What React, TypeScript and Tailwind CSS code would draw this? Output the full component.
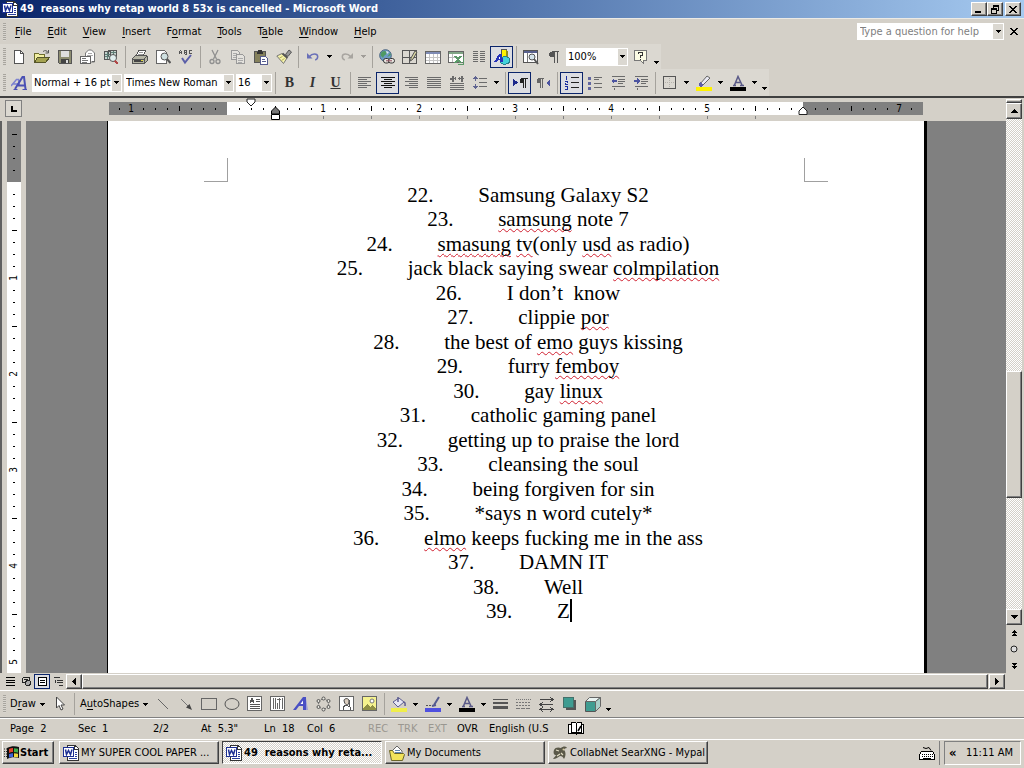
import React from 'react';

const raised =
  'border border-t-white border-l-white border-r-[#404040] border-b-[#404040] shadow-[inset_-1px_-1px_0_#808080] bg-[#d4d0c8]';
const dither = 'bg-[repeating-conic-gradient(#ffffff_0_25%,#d4d0c8_0_50%)] bg-[length:2px_2px]';

type Kids = { children?: React.ReactNode };

function Ico({ children, w = 16, h = 16, smooth = false }: Kids & { w?: number; h?: number; smooth?: boolean }) {
  return (
    <svg
      width={w}
      height={h}
      viewBox={`0 0 ${w} ${h}`}
      fill="none"
      stroke="none"
      shapeRendering={smooth ? 'auto' : 'crispEdges'}
      className="shrink-0"
      aria-hidden="true"
    >
      {children}
    </svg>
  );
}

function Btn({ label, pressed, children }: Kids & { label: string; pressed?: boolean }) {
  return (
    <button
      aria-label={label}
      className={
        'flex h-[22px] w-[23px] shrink-0 items-center justify-center ' +
        (pressed ? 'border border-[#0a246a] bg-[#dcdde2]' : '')
      }
    >
      {children}
    </button>
  );
}

function Tri({ dir = 'down', color = '#000' }: { dir?: 'down' | 'up' | 'left' | 'right'; color?: string }) {
  const d = { down: 'M0 0h5v1h-1v1h-1v1h-1v-1h-1v-1h-1z', up: 'M3 0h1v1h1v1h1v1h1v1h-7v-1h1v-1h1v-1h1z', left: 'M3 0h1v7h-1v-1h-1v-1h-1v-1h-1v-1h1v-1h1v-1h1z', right: 'M0 0h1v1h1v1h1v1h1v1h-1v1h-1v1h-1v1h-1z' }[dir];
  const size = { down: [5, 3], up: [7, 4], left: [4, 7], right: [4, 7] }[dir];
  return (
    <Ico w={size[0]} h={size[1]}>
      <path d={d} fill={color} />
    </Ico>
  );
}

function Drop({ label, color }: { label: string; color?: string }) {
  return (
    <button aria-label={label} className="flex h-[22px] w-[11px] shrink-0 items-center justify-center">
      <Tri color={color} />
    </button>
  );
}

function Sep() {
  return (
    <span className="flex h-[22px] w-[6px] shrink-0 justify-center">
      <span className="w-px bg-[#a5a29c]" />
    </span>
  );
}

function Grip() {
  return (
    <span className="mr-[1px] ml-[3px] h-[18px] w-[3px] shrink-0 bg-[repeating-linear-gradient(to_bottom,#a8a59e_0_1px,#d9d6d0_1px_2px)]" />
  );
}

function Tail({ label }: { label: string }) {
  return (
    <button aria-label={label} className="flex h-[22px] w-[9px] shrink-0 items-end justify-center pb-[4px]">
      <Tri />
    </button>
  );
}

function Combo({ label, value, width }: { label: string; value: string; width: string }) {
  return (
    <div className={`relative flex h-[18px] shrink-0 items-center bg-white ${width}`}>
      <select
        aria-label={label}
        className="h-full w-full appearance-none bg-transparent pr-[8px] pl-[2px] whitespace-nowrap outline-none"
      >
        <option>{value}</option>
      </select>
      <span className="pointer-events-none absolute top-px right-px bottom-px flex w-[9px] items-center justify-center bg-[#dbd8d1]">
        <Tri />
      </span>
    </div>
  );
}

/* ---------- icons ---------- */
const G = '#6b6b6b';

const lineIcon = (rows: [number, number][], color = G) => (
  <Ico>
    {rows.map(([x, w], i) => (
      <rect key={i} x={x} y={2 + i * 2} width={w} height="1" fill={color} />
    ))}
  </Ico>
);

const WordIcon = () => (
  <Ico>
    <path d="M4 .5h8l3.500 3V15.500H4z" fill="#fff" stroke="#333" />
    <path d="M11 1v3h4" stroke="#333" />
    <path d="M12 7h2M12 9h2M12 11h2M6 13h8" stroke="#2a3f9a" />
    <rect x=".5" y="2.500" width="10" height="9" fill="#fff" stroke="#1c2f93" />
    <path d="M2.500 4.500l1 5 2-4 2 4 1.500-5" stroke="#1c2f93" strokeWidth="1.500" shapeRendering="auto" />
  </Ico>
);

const NewI = () => (
  <Ico>
    <path d="M3.500 1.500h6l3 3v10h-9z" fill="#fff" stroke="#555" />
    <path d="M9.500 1.500v3h3" stroke="#555" />
  </Ico>
);
const OpenI = () => (
  <Ico>
    <path d="M.5 13.500v-9h4l1 1h5v3" fill="#f2efa0" stroke="#6d6d2f" />
    <path d="M.5 13.500l3-5h12l-4 5z" fill="#a5a352" stroke="#55552a" />
    <path d="M9 2.500c2-1.500 4-1 5 1M14.500 1v3h-3" stroke="#555" shapeRendering="auto" />
  </Ico>
);
const SaveI = () => (
  <Ico>
    <path d="M1.500 1.500h13v13h-12l-1-1z" fill="#8d8d71" stroke="#555" />
    <rect x="4" y="2" width="8" height="6" fill="#dedede" />
    <rect x="4" y="10" width="8" height="4" fill="#444" />
    <rect x="9" y="11" width="2" height="3" fill="#ddd" />
  </Ico>
);
const MailI = () => (
  <Ico>
    <path d="M5.500 8V4l3-3h3l3 3v9h-4" fill="#fff" stroke="#777" shapeRendering="auto" />
    <path d="M8 4h4M7 6h6" stroke="#aaa" />
    <rect x=".5" y="7.500" width="10" height="7" fill="#fff" stroke="#666" />
    <path d="M2 9.500h4M2 11.500h6M2 13h5" stroke="#777" />
    <path d="M12 12.500h3" stroke="#666" />
  </Ico>
);
const SearchI = () => (
  <Ico>
    <path d="M1.500 2.500h6v8h-6zM5.500 1.500h8v6h-8z" fill="#c5d3ce" stroke="#555" />
    <path d="M2 5h5M2 7h5M4 3v7M8 3h5M10 2v5" stroke="#5d7d75" />
    <circle cx="10" cy="9" r="3.500" fill="#dfeeee" stroke="#555" shapeRendering="auto" />
    <path d="M12 12l3 3" stroke="#b04848" strokeWidth="2" />
  </Ico>
);
const PrintI = () => (
  <Ico>
    <path d="M4.500 6.500l2-5h7l-2 5z" fill="#fff" stroke="#555" />
    <path d="M7 3h4M6 5h5" stroke="#999" />
    <path d="M.5 9.500l3-3h11l1 1v4l-3 3h-12z" fill="#b5b5a5" stroke="#555" />
    <path d="M1 10h11v4M12 10l3-3" stroke="#555" />
    <path d="M2 12h9" stroke="#444" strokeWidth="2" />
    <rect x="9" y="11" width="2" height="1" fill="#dbd53b" />
  </Ico>
);
const PreviewI = () => (
  <Ico>
    <path d="M1.500 1.500h8l2 2v11h-10z" fill="#fff" stroke="#666" />
    <circle cx="9.500" cy="7.500" r="3.500" fill="#cfe0e0" stroke="#555" shapeRendering="auto" />
    <path d="M12 10l3.500 4" stroke="#555" strokeWidth="2" shapeRendering="auto" />
  </Ico>
);
const SpellI = () => (
  <Ico>
    <path d="M1.500 5V2.500l1-1 1 1V5M1.500 3.500h2M6.500 5V1h2v4h-2M6 3h3M14 1.500h-3v3h3" stroke="#555" />
    <path d="M4 9l3 4.500L13 6" stroke="#5b5fa8" strokeWidth="2" shapeRendering="auto" />
  </Ico>
);
const CutI = () => (
  <Ico smooth>
    <path d="M5 1l4.500 9M11 1L6.500 10" stroke="#8f8f8f" strokeWidth="1.300" />
    <circle cx="5" cy="12.500" r="2" stroke="#8f8f8f" strokeWidth="1.300" />
    <circle cx="11" cy="12.500" r="2" stroke="#8f8f8f" strokeWidth="1.300" />
  </Ico>
);
const CopyI = () => (
  <Ico>
    <path d="M1.500 1.500h6l2 2v7h-8z" fill="#e4e2dd" stroke="#999" />
    <path d="M6.500 5.500h6l2 2v7h-8z" fill="#e4e2dd" stroke="#999" />
    <path d="M3 4h4M3 6h3M3 8h3M8 9h5M8 11h5M8 13h4" stroke="#aaa" />
  </Ico>
);
const PasteI = () => (
  <Ico>
    <rect x="1.500" y="2.500" width="11" height="11" fill="#85815c" stroke="#555" />
    <path d="M4 3.500h6M5 1.500h4" stroke="#333" strokeWidth="2" />
    <path d="M7.500 7.500h5l2 2v6h-7z" fill="#fff" stroke="#555b8f" />
    <path d="M9 10h3M9 12h4" stroke="#555b8f" />
  </Ico>
);
const BrushI = () => (
  <Ico smooth>
    <path d="M.8 7l5.200-2.500 5 4.500-3.500 5.500z" fill="#f6f3a8" stroke="#777" />
    <path d="M3.500 9l3-1.500M5.500 11.500l3-2" stroke="#b3af5c" />
    <path d="M6.500 4.500l5 4.500" stroke="#555" strokeWidth="2" />
    <path d="M9.500 5.500l3.500-4.500 2.500 2L12 7.500z" fill="#999" stroke="#555" />
  </Ico>
);
const UndoI = ({ c = '#6a70b8', flip = false }: { c?: string; flip?: boolean }) => (
  <Ico smooth>
    <g transform={flip ? 'matrix(-1 0 0 1 16 0)' : undefined}>
      <path d="M2 4v5.500h5.500z" fill={c} />
      <path d="M4.500 7.500C7 4 12.500 4 12.700 7.500c0 2-1 3-2.500 3.500" stroke={c} strokeWidth="1.500" />
    </g>
  </Ico>
);
const LinkI = () => (
  <Ico smooth>
    <circle cx="6.500" cy="6.500" r="5.800" fill="#6d9cc4" stroke="#46617f" />
    <path d="M2.500 3c3-2 5-1 5 1S5 6 4.500 8 2 7 1.500 6M8 8l4-2-1-2" fill="#4f9a63" />
    <path d="M7 2l3 1-2 2z" fill="#dfeaf2" />
    <rect x="4.500" y="9.500" width="6" height="4.500" rx="2.200" fill="#e9e7e2" stroke="#333" />
    <rect x="9.500" y="9.500" width="6" height="4.500" rx="2.200" fill="#e9e7e2" stroke="#333" />
    <path d="M7 11.800h6" stroke="#8d4a5c" />
  </Ico>
);
const BordersI = () => (
  <Ico>
    <path d="M.5 1.500h14v13H.5zM7.500 1v14M1 8.500h14" stroke="#555" />
    <path d="M13 2l-4 7-.500 3 2.500-2 4-7z" fill="#dcd9a4" stroke="#555" shapeRendering="auto" />
  </Ico>
);
const TableI = () => (
  <Ico>
    <rect x=".5" y="2.500" width="15" height="12" fill="#fff" stroke="#666" />
    <rect x="1" y="3" width="14" height="2" fill="#7f8cb5" />
    <path d="M4.500 5v9M8.500 5v9M12 5v9M1 8.500h14M1 11.500h14" stroke="#c5c5c5" />
  </Ico>
);
const ExcelI = () => (
  <Ico>
    <rect x=".5" y="2.500" width="15" height="11" fill="#fff" stroke="#666" />
    <rect x="1" y="3" width="14" height="2" fill="#7fa585" />
    <path d="M4.500 5v8M1 8.500h9" stroke="#bbb" />
    <path d="M7 7l6 7M13 7l-6 7" stroke="#5b9868" strokeWidth="2" />
    <path d="M15 8v7h-5" stroke="#5b9868" />
  </Ico>
);
const ColsI = () => (
  <Ico>
    <path d="M2 2.500h5M2 4.500h5M2 6.500h5M2 8.500h5M2 10.500h5M2 12.500h5M9 2.500h5M9 4.500h5M9 6.500h5M9 8.500h5M9 10.500h5M9 12.500h5" stroke={G} />
  </Ico>
);
const DrawI = () => (
  <Ico>
    <path d="M7.500.5h5v9h-5z" fill="#fff200" stroke="#555" />
    <path d="M12 1l2 2v7h-2z" fill="#8f8f20" />
    <path d="M6 10c1-3 9-3 9.500 0v2.500c-1 3.500-9 3.500-9.500 0z" fill="#43d3dc" stroke="#257f8c" />
    <path d="M0 13L5 5h3l1 8H6v-2H4l-1 2z" fill="#2632b8" />
    <rect x="5" y="8" width="1" height="2" fill="#fff" />
  </Ico>
);
const MapI = () => (
  <Ico>
    <rect x=".5" y="1.500" width="14" height="12" fill="#fff" stroke="#555" />
    <rect x="1" y="2" width="13" height="2" fill="#59618e" />
    <path d="M4.500 4v9" stroke="#777" />
    <circle cx="9" cy="8" r="3" fill="#d7e6ee" stroke="#555" shapeRendering="auto" />
    <path d="M11 10l4 5" stroke="#555" strokeWidth="2" shapeRendering="auto" />
  </Ico>
);
const ParaI = () => (
  <Ico>
    <path d="M6 2h7v1H6zM4 3h4v5H4zM3 4h1v3H3zM8 2h1v12H8zM11 2h1v12h-1z" fill="#555" />
  </Ico>
);
const HelpI = () => (
  <Ico>
    <path d="M1.500 1.500h12v10h-3v3l-3-3h-6z" fill="#fbfbe4" stroke="#777" />
    <path d="M5.500 5V3.500h4V6l-2 1v1.500M7.500 10v1" stroke="#333" />
  </Ico>
);
const StylesI = () => (
  <Ico smooth>
    <path d="M0 11L5.500 4.500h2l1 6.500M2 9h6" stroke="#7d82d0" strokeWidth="1.500" />
    <path d="M4 14L11.500 2h1.500l1.500 12M7 10.500h7" stroke="#4a50b4" strokeWidth="2" />
    <path d="M2.500 14.500h4M11.500 14.500h4.500" stroke="#4a50b4" />
  </Ico>
);
const DistI = () => (
  <Ico>
    <path d="M1 8.500h14M1 10.500h14M1 12.500h14M1 14.500h14" stroke={G} />
    <path d="M1 3.500h6M9 3.500h6" stroke={G} />
    <path d="M3 1v5h1V1zM12 1v5h1V1zM1 3h1v1H1zM6 2v3M10 2v3" stroke={G} />
  </Ico>
);
const SpacingI = () => (
  <Ico>
    <path d="M7 3.500h8M7 7.500h8M7 11.500h8" stroke={G} />
    <path d="M3.500 1v5M3.500 9v5M1 3.500h5M2 2.500h3M1 11.500h5M2 12.500h3" stroke="#5e6390" />
  </Ico>
);
const DirI = ({ rtl = false }: { rtl?: boolean }) => (
  <Ico>
    {rtl ? (
      <path d="M3 3h6v1H3zM2 4h3v4H2zM5 3h1v10H5zM7 3h1v10H7z" fill="#666" />
    ) : (
      <path d="M9 3h7v1H9zM8 4h3v4H8zM11 3h1v10h-1zM13 3h1v10h-1z" fill="#222" />
    )}
    {rtl ? <path d="M15 5v6l-4-3z" fill="#4c54a0" /> : <path d="M1 4v7l5-3.500z" fill="#1b278b" />}
  </Ico>
);
const NumI = () => (
  <Ico>
    <path d="M7 2.500h8M7 7.500h8M7 12.500h8" stroke="#222" />
    <path d="M2 1h1v4H2zM1 6h3v1H1zM3 7h1v1H2v1h2v1H1V8h1zM1 11h3v1H1zM3 12h1v3H1v-1h2zM2 13h2" fill="#1b2fa0" />
  </Ico>
);
const BulI = () => (
  <Ico>
    <path d="M7 2.500h8M7 4.500h5M7 8.500h8M7 12.500h8" stroke={G} />
    <path d="M1 2h3v3H1zM1 7h3v3H1zM1 12h3v3H1z" fill="#6166a0" />
  </Ico>
);
const IndentI = ({ right = false }: { right?: boolean }) => (
  <Ico>
    <path d="M2 1.500h13M8 4.500h7M8 6.500h7M8 8.500h5M2 11.500h13M4.500 13v2" stroke={G} />
    {right ? <path d="M1 5h3V3l3 3-3 3V7H1z" fill="#4c54a0" /> : <path d="M7 5H4V3L1 6l3 3V7h3z" fill="#4c54a0" />}
  </Ico>
);
const BoxI = () => (
  <Ico>
    <rect x="1.500" y="1.500" width="12" height="12" stroke="#555" />
    <path d="M7.500 3v10M3 7.500h10" stroke="#b5b2ac" strokeDasharray="1 1" />
  </Ico>
);
const HiI = () => (
  <Ico>
    <path d="M4 9L11 1l3 2-7 7z" fill="#e9e9f4" stroke="#666" shapeRendering="auto" />
    <path d="M3 10l3 1M4 8l3 3" stroke="#5e5ea8" strokeWidth="2" />
    <rect x="0" y="12" width="16" height="4" fill="#fff200" />
  </Ico>
);
const FontColorI = () => (
  <Ico>
    <path d="M3 10.500h3M10 10.500h4M4.500 10L8 1.500 12 10M5.500 7.500h5" stroke="#5a5a88" strokeWidth="1.500" shapeRendering="auto" />
    <rect x="0" y="12" width="16" height="4" fill="#000" />
  </Ico>
);
const FillI = () => (
  <Ico>
    <path d="M2 6l6-4 5 4-6 5z" fill="#e6e6f4" stroke="#5c5c90" shapeRendering="auto" />
    <path d="M7 1v5M13 6c2 1 1 3 1 4" stroke="#5c5c90" strokeWidth="1.500" shapeRendering="auto" />
    <rect x="0" y="12" width="16" height="4" fill="#f0ee4b" />
  </Ico>
);
const LineColorI = () => (
  <Ico>
    <path d="M9 9l5-8M7 10l4-1" stroke="#555b90" strokeWidth="2" shapeRendering="auto" />
    <path d="M1 9.500h5" stroke="#555" strokeDasharray="2 1" />
    <rect x="0" y="12" width="16" height="4" fill="#4f50e0" />
  </Ico>
);
const PointerI = () => (
  <Ico smooth>
    <path d="M4.500 1v11l2.500-2.500 2 4.500 2-1-2-4h3.500z" fill="#fff" stroke="#444" />
  </Ico>
);
const TextBoxI = ({ vertical = false }: { vertical?: boolean }) => (
  <Ico>
    <rect x=".5" y=".5" width="14" height="14" fill="#fff" stroke="#666" />
    {vertical ? (
      <path d="M3.500 2v11M5.500 2v11M7.500 7v6M9.500 2v11M12.500 2v11M7 3.500h4" stroke="#666" />
    ) : (
      <path d="M3 6.500l2-4 2 4M3.500 5.500h3M9 3.500h4M9 5.500h4M3 8.500h10M3 10.500h10M3 12.500h10" stroke="#555" />
    )}
  </Ico>
);
const WordArtI = () => (
  <Ico smooth>
    <path d="M0 14L10 1h3v13h-3v-4H6l-3 4z" fill="#4a50c4" />
    <path d="M7.500 8H10V4.500z" fill="#fff" />
    <path d="M13 2l2 12h-2z" fill="#9da0d4" />
  </Ico>
);
const DiagramI = () => (
  <Ico smooth>
    <circle cx="7.500" cy="8" r="5" stroke="#777" strokeDasharray="3 2" />
    {[[7.5, 2.5], [12.5, 5], [12.5, 11], [7.5, 13.5], [2.5, 11], [2.5, 5]].map(([x, y]) => (
      <circle key={`${x}-${y}`} cx={x} cy={y} r="1.500" fill="#e8e8e0" stroke="#555" />
    ))}
  </Ico>
);
const ClipI = () => (
  <Ico>
    <rect x=".5" y=".5" width="14" height="14" fill="#fff" stroke="#666" />
    <path d="M5 4c1-2 5-2 5 1s-1 4-2 4-3-2-3-5z" fill="#dccfc0" stroke="#444" shapeRendering="auto" />
    <path d="M4 14v-3l3-2 4 2v3M10 4v6" stroke="#555" />
  </Ico>
);
const PictureI = () => (
  <Ico>
    <rect x=".5" y=".5" width="14" height="14" fill="#f5f28e" stroke="#666" />
    <path d="M1 13l4-5 3 3 2-2 4 4v1H1z" fill="#8f8f45" />
    <circle cx="10" cy="5" r="2" fill="#fff" stroke="#777" shapeRendering="auto" />
  </Ico>
);
const FolderI = () => (
  <Ico>
    <path d="M3 6l5-5 5 5v4H3z" fill="#fff" stroke="#666" shapeRendering="auto" />
    <path d="M6 5h5M6 7h6" stroke="#5d86b5" />
    <path d="M.5 5.500h3l2 3h9l1 1-2 6h-11z" fill="#f2e35b" stroke="#6a6428" shapeRendering="auto" />
  </Ico>
);
const MypalI = () => (
  <Ico smooth>
    <path d="M2 5c1-3 5-3 7-2 2-2 5-2 6 0-2 0-3 1-3 2 2 2 2 6 0 9-1-2-2-3-4-3-2 1-4 3-7 3 1-2 3-3 3-4C2 10 1 8 2 5z" fill="#5a5848" />
    <path d="M4 5l3 1M9 8l2 2M5 11l3-2" stroke="#e4dfc6" strokeWidth="1.200" />
    <circle cx="11.500" cy="4.500" r="1" fill="#d5cba0" />
  </Ico>
);
const WinI = () => (
  <Ico smooth>
    <path d="M0 4h3M0 6.500h3M0 9h3M0 11.500h3" stroke="#333" strokeDasharray="1 1" />
    <path d="M3 3c4-2 8-2 12-1v11c-4-1-8-1-12 1z" fill="#111" />
    <path d="M5 4c1.500-.8 3-.9 4-.9v4c-1.500 0-3 .2-4 .8z" fill="#e0442e" />
    <path d="M10 3.200c1.500 0 3 .2 4 .6v4c-1-.5-2.500-.6-4-.6z" fill="#3fae4a" />
    <path d="M5 9c1.500-.6 3-.8 4-.8v3.800c-1.500 0-3 .2-4 .8z" fill="#3d63d8" />
    <path d="M10 8.200c1.500 0 3 .2 4 .6v3.700c-1-.4-2.500-.5-4-.5z" fill="#f1d83a" />
  </Ico>
);
const CloseX = () => (
  <Ico w={8} h={7}>
    <path d="M0 0h2v1h1v1h2v-1h1v-1h2v1h-1v1h-1v1h-1v1h1v1h1v1h1v1h-2v-1h-1v-1h-2v1h-1v1h-2v-1h1v-1h1v-1h1v-1h-1v-1h-1v-1h-1z" fill="#000" />
  </Ico>
);

/* ---------- sections ---------- */
function TitleBar() {
  const b = `flex h-[14px] w-[16px] items-center justify-center ${raised}`;
  return (
    <header className="flex h-[18px] shrink-0 items-center bg-linear-to-r from-[#0a246a] to-[#a6caf0] pr-[3px] pl-[2px] text-white">
      <WordIcon />
      <h1 className="ml-[2px] flex-1 text-[11px] leading-[14px] font-bold whitespace-pre">
        49  reasons why retap world 8 53x is cancelled - Microsoft Word
      </h1>
      <button aria-label="Minimize" className={b}>
        <Ico w={8} h={8}>
          <rect x="0" y="6" width="6" height="2" fill="#000" />
        </Ico>
      </button>
      <button aria-label="Restore" className={b}>
        <Ico w={8} h={9}>
          <path d="M2.500 3V.5h5v5H6M2 1.500h6M.5 3.500h5v5h-5zM0 4.500h6" stroke="#000" />
        </Ico>
      </button>
      <button aria-label="Close" className={`ml-[2px] ${b}`}>
        <CloseX />
      </button>
    </header>
  );
}

const menus: [string, string, string][] = [
  ['', 'F', 'ile'],
  ['', 'E', 'dit'],
  ['', 'V', 'iew'],
  ['', 'I', 'nsert'],
  ['F', 'o', 'rmat'],
  ['', 'T', 'ools'],
  ['T', 'a', 'ble'],
  ['', 'W', 'indow'],
  ['', 'H', 'elp'],
];

function MenuBar() {
  return (
    <div className="flex h-[26px] shrink-0 items-center border-t border-[#eceae5]">
      <Grip />
      <nav className="flex flex-1">
        {menus.map(([a, u, z]) => (
          <button key={a + u + z} className="px-2">
            {a}
            <span className="underline underline-offset-2">{u}</span>
            {z}
          </button>
        ))}
      </nav>
      <div className="flex h-[17px] w-[147px] items-center bg-white">
        <input
          aria-label="Type a question for help"
          placeholder="Type a question for help"
          className="h-full min-w-0 flex-1 pl-[3px] outline-none placeholder:text-[#808080]"
        />
        <button aria-label="Recent questions" className="mr-px flex h-[15px] w-[10px] items-center justify-center bg-[#dbd8d1]">
          <Tri />
        </button>
      </div>
      <button aria-label="Close document" className="mr-[6px] ml-[6px]">
        <CloseX />
      </button>
    </div>
  );
}

function StandardBar() {
  return (
    <div role="toolbar" aria-label="Standard" className="flex h-[25px] w-fit shrink-0 items-center bg-[#dbd8d1]">
      <Grip />
      <Btn label="New"><NewI /></Btn>
      <Btn label="Open"><OpenI /></Btn>
      <Btn label="Save"><SaveI /></Btn>
      <Btn label="E-mail"><MailI /></Btn>
      <Btn label="Search"><SearchI /></Btn>
      <Sep />
      <Btn label="Print"><PrintI /></Btn>
      <Btn label="Print preview"><PreviewI /></Btn>
      <Btn label="Spelling"><SpellI /></Btn>
      <Sep />
      <Btn label="Cut"><CutI /></Btn>
      <Btn label="Copy"><CopyI /></Btn>
      <Btn label="Paste"><PasteI /></Btn>
      <Btn label="Format painter"><BrushI /></Btn>
      <Sep />
      <Btn label="Undo"><UndoI /></Btn>
      <Drop label="Undo list" />
      <Btn label="Redo"><UndoI c="#a8a5a0" flip /></Btn>
      <Drop label="Redo list" color="#a09d98" />
      <Sep />
      <Btn label="Insert hyperlink"><LinkI /></Btn>
      <Btn label="Tables and borders"><BordersI /></Btn>
      <Btn label="Insert table"><TableI /></Btn>
      <Btn label="Insert worksheet"><ExcelI /></Btn>
      <Btn label="Columns"><ColsI /></Btn>
      <Btn label="Drawing" pressed><DrawI /></Btn>
      <Sep />
      <Btn label="Document map"><MapI /></Btn>
      <Btn label="Show marks"><ParaI /></Btn>
      <div className="px-px">
        <Combo label="Zoom" value="100%" width="w-[62px]" />
      </div>
      <Btn label="Help"><HelpI /></Btn>
      <Tail label="Standard options" />
    </div>
  );
}

function FormatBar() {
  const letter = "font-['Liberation_Serif',serif] text-[14px] leading-[16px] text-[#333]";
  return (
    <div role="toolbar" aria-label="Formatting" className="flex h-[27px] w-fit shrink-0 items-center bg-[#dbd8d1]">
      <Grip />
      <Btn label="Styles"><StylesI /></Btn>
      <div className="flex gap-[2px] pl-[2px]">
        <Combo label="Style" value="Normal + 16 pt" width="w-[90px]" />
        <Combo label="Font" value="Times New Roman" width="w-[110px]" />
        <Combo label="Font size" value="16" width="w-[36px]" />
      </div>
      <Sep />
      <Btn label="Bold"><span className={`font-bold ${letter}`}>B</span></Btn>
      <Btn label="Italic"><span className={`font-bold italic ${letter}`}>I</span></Btn>
      <Btn label="Underline"><span className={`font-bold underline ${letter}`}>U</span></Btn>
      <Sep />
      <Btn label="Align left">{lineIcon([[1, 13], [1, 9], [1, 13], [1, 9], [1, 13], [1, 9]])}</Btn>
      <Btn label="Center" pressed>{lineIcon([[1, 14], [4, 8], [1, 14], [4, 8], [1, 14], [4, 8]], '#111')}</Btn>
      <Btn label="Align right">{lineIcon([[2, 13], [6, 9], [2, 13], [6, 9], [2, 13], [6, 9]])}</Btn>
      <Btn label="Justify">{lineIcon([[1, 14], [1, 14], [1, 14], [1, 14], [1, 14], [1, 14]])}</Btn>
      <Btn label="Distributed"><DistI /></Btn>
      <Btn label="Line spacing"><SpacingI /></Btn>
      <Drop label="Line spacing list" />
      <Sep />
      <Btn label="Left to right" pressed><DirI /></Btn>
      <Btn label="Right to left"><DirI rtl /></Btn>
      <Sep />
      <Btn label="Numbering" pressed><NumI /></Btn>
      <Btn label="Bullets"><BulI /></Btn>
      <Btn label="Decrease indent"><IndentI /></Btn>
      <Btn label="Increase indent"><IndentI right /></Btn>
      <Sep />
      <Btn label="Border"><BoxI /></Btn>
      <Drop label="Border list" />
      <Btn label="Highlight"><HiI /></Btn>
      <Drop label="Highlight list" />
      <Btn label="Font color"><FontColorI /></Btn>
      <Drop label="Font color list" />
      <Tail label="Formatting options" />
    </div>
  );
}

const hTicks = Array.from({ length: 67 }, (_, i) => i - 9);

function HTick({ k }: { k: number }) {
  if (k === 0 || k === 48) return null;
  if (k % 8 === 0) return <span className="leading-[12px]">{Math.abs(k / 8)}</span>;
  return <span className={k % 4 === 0 ? 'h-[5px] w-px bg-black' : 'h-[2px] w-px bg-black'} />;
}

function HRuler() {
  return (
    <div className="flex h-[25px] shrink-0 border-t-2 border-[#404040]">
      <div className="flex w-[109px] shrink-0 pt-[2px] pl-[5px]">
        <button aria-label="Left tab" className="flex size-[17px] items-center justify-center border border-[#808080] bg-[#dbd8d1]">
          <Ico w={6} h={6}>
            <path d="M0 0h2v4h4v2H0z" fill="#000" />
          </Ico>
        </button>
      </div>
      <div className="relative mt-[4px] flex h-[13px] w-[814px] shrink-0 bg-[linear-gradient(to_right,#808080_118px,#ffffff_118px,#ffffff_694px,#808080_694px)] pl-[4px] text-[10px]">
        {hTicks.map((k) => (
          <span key={k} className="relative flex w-3 shrink-0 items-center justify-center">
            <HTick k={k} />
            {k >= 8 && k < 48 && k % 4 === 0 && <span className="absolute top-[14px] left-[6px] h-[3px] w-px bg-[#808080]" />}
          </span>
        ))}
        <span className="absolute -top-[4px] left-[137px]">
          <Ico w={11} h={9} smooth>
            <path d="M1 1h8v3l-4 4-4-4z" fill="#fff" stroke="#222" />
          </Ico>
        </span>
        <span className="absolute top-[4px] left-[162px]">
          <Ico w={10} h={15} smooth>
            <path d="M.5 8V5L4.500 1l4 4v3z" fill="#777" stroke="#000" />
            <path d="M.5 8.500h8v5h-8z" fill="#fff" stroke="#000" />
          </Ico>
        </span>
        <span className="absolute top-[4px] left-[689px]">
          <Ico w={11} h={10} smooth>
            <path d="M1 8.500V5l4-4 4 4v3.500z" fill="#fff" stroke="#222" />
          </Ico>
        </span>
      </div>
    </div>
  );
}

const vTicks = Array.from({ length: 45 }, (_, i) => i - 4);

function VRuler() {
  return (
    <div className="flex w-[26px] shrink-0 border-l-2 border-[#606060] pr-[5px] pl-[5px]">
      <div className="flex w-[14px] flex-col overflow-hidden bg-[linear-gradient(to_bottom,#808080_61px,#ffffff_61px)] pt-[7px] text-[10px]">
        {vTicks.map((k) => (
          <span key={k} className="flex h-3 shrink-0 items-center justify-center">
            {k === 0 ? null : k % 8 === 0 ? (
              <span className="-rotate-90 leading-[12px]">{k / 8}</span>
            ) : (
              <span className={k % 4 === 0 ? 'h-px w-[5px] bg-black' : 'h-px w-[2px] bg-black'} />
            )}
          </span>
        ))}
      </div>
    </div>
  );
}

type Run = string | { bad: string };
const items: Run[][] = [
  ['Samsung Galaxy S2'],
  [{ bad: 'samsung' }, ' note 7'],
  [{ bad: 'smasung' }, ' ', { bad: 'tv' }, '(only ', { bad: 'usd' }, ' as radio)'],
  ['jack black saying swear ', { bad: 'colmpilation' }],
  ['I don’t  know'],
  ['clippie ', { bad: 'por' }],
  ['the best of ', { bad: 'emo' }, ' guys kissing'],
  ['furry ', { bad: 'femboy' }],
  ['gay ', { bad: 'linux' }],
  ['catholic gaming panel'],
  ['getting up to praise the lord'],
  ['cleansing the soul'],
  ['being forgiven for sin'],
  ['*says n word cutely*'],
  [{ bad: 'elmo' }, ' keeps fucking me in the ass'],
  ['DAMN IT'],
  ['Well'],
  ['Z'],
];

function Page() {
  return (
    <main className="flex min-w-0 flex-1 overflow-hidden bg-[#808080] pl-[81px]">
      <article className="w-[820px] shrink-0 border-r-[3px] border-l border-black bg-white pt-[37px]">
        <div className="flex justify-between px-[96px] pb-px">
          <span className="h-[24px] w-[24px] border-r border-b border-[#a0a0a0]" />
          <span className="h-[24px] w-[24px] border-b border-l border-[#a0a0a0]" />
        </div>
        <ol className="pr-[120px] pl-[144px] font-['Liberation_Serif',serif] text-[21px]">
          {items.map((runs, i) => (
            <li key={i} className="flex justify-center leading-[25px] whitespace-pre odd:leading-[24px]">
              <span className="w-[71px]">{22 + i}.</span>
              <span>
                {runs.map((r, j) =>
                  typeof r === 'string' ? (
                    r
                  ) : (
                    <span key={j} className="underline decoration-[#d02030] decoration-wavy decoration-1 underline-offset-2 [text-decoration-skip-ink:none]">
                      {r.bad}
                    </span>
                  ),
                )}
              </span>
              {i === items.length - 1 && <span className="-mr-[2px] h-[23px] w-[2px] bg-black" />}
            </li>
          ))}
        </ol>
      </article>
    </main>
  );
}

function VScroll() {
  const b = `flex h-[16px] w-full shrink-0 items-center justify-center ${raised}`;
  const n = 'flex h-[16px] w-full shrink-0 items-center justify-center';
  return (
    <div className="-mt-[22px] mr-[2px] flex w-[16px] shrink-0 flex-col">
      <span className={`h-[4px] shrink-0 ${raised}`} />
      <button aria-label="Scroll up" className={b}><Tri dir="up" /></button>
      <div className={`flex min-h-0 flex-1 flex-col ${dither}`}>
        <span className="flex-[254]" />
        <span className={`flex-[125] ${raised}`} />
        <span className="flex-[112]" />
      </div>
      <button aria-label="Scroll down" className={b}>
        <span className="flex rotate-180"><Tri dir="up" /></span>
      </button>
      <button aria-label="Previous page" className={n}>
        <Ico w={7} h={7}><path d="M3 0h1v1h1v1h1v1H1v-1h1v-1h1zM3 3h1v1h1v1h1v1H1V5h1V4h1z" fill="#000" /></Ico>
      </button>
      <button aria-label="Browse object" className={n}>
        <Ico w={8} h={8} smooth><circle cx="4" cy="4" r="3" fill="#ddd" stroke="#222" /></Ico>
      </button>
      <button aria-label="Next page" className={n}>
        <span className="flex rotate-180">
          <Ico w={7} h={7}><path d="M3 0h1v1h1v1h1v1H1v-1h1v-1h1zM3 3h1v1h1v1h1v1H1V5h1V4h1z" fill="#000" /></Ico>
        </span>
      </button>
    </div>
  );
}

function HScroll() {
  const v = 'flex h-[15px] w-[16px] shrink-0 items-center justify-center';
  const ends = `flex h-[15px] w-[16px] shrink-0 items-center justify-center ${raised}`;
  return (
    <div className="flex h-[17px] shrink-0 items-center pr-[19px] pl-[2px]">
      <button aria-label="Normal view" className={v}>
        <Ico w={9} h={9}><path d="M0 .5h9M0 3.500h9M0 5.500h9M0 8.500h9" stroke="#000" /></Ico>
      </button>
      <button aria-label="Web layout view" className={v}>
        <Ico w={9} h={9}><path d="M.5.5h7v5M.5.5v5h4M2 2.500h4" stroke="#222" /><circle cx="6" cy="6" r="2.500" fill="#aaa" stroke="#222" /></Ico>
      </button>
      <button aria-label="Print layout view" className={`${v} border border-[#0a246a] bg-[#dcdde2]`}>
        <Ico w={9} h={9}><path d="M.5.5h8v8h-8zM2 3.500h5M2 5.500h5" fill="#fff" stroke="#000" /></Ico>
      </button>
      <button aria-label="Outline view" className={v}>
        <Ico w={9} h={9}><path d="M0 .5h6M3 3.500h6M3 5.500h6M5 8.500h4M1.500 3v3" stroke="#333" /></Ico>
      </button>
      <button aria-label="Scroll left" className={ends}><Tri dir="left" /></button>
      <span className={`h-[15px] flex-1 ${raised}`} />
      <button aria-label="Scroll right" className={`ml-px ${ends}`}><Tri dir="right" /></button>
    </div>
  );
}

function DrawBar() {
  return (
    <div role="toolbar" aria-label="Drawing" className="flex h-[27px] shrink-0 items-center border-t border-white">
      <Grip />
      <button className="flex w-[41px] items-center gap-[4px] pl-[3px] whitespace-nowrap">
        <span>D<span className="underline underline-offset-2">r</span>aw</span>
        <Tri />
      </button>
      <Btn label="Select objects"><PointerI /></Btn>
      <Sep />
      <button className="flex w-[74px] items-center gap-[4px] pl-[3px] whitespace-nowrap">
        <span>A<span className="underline underline-offset-2">u</span>toShapes</span>
        <Tri />
      </button>
      <Btn label="Line"><Ico smooth><path d="M3 3l10 10" stroke="#666" /></Ico></Btn>
      <Btn label="Arrow"><Ico smooth><path d="M3 3l8 8" stroke="#777" /><path d="M14 14l-6-2.500 3.500-3.500z" fill="#444" /></Ico></Btn>
      <Btn label="Rectangle"><Ico><rect x=".5" y="2.500" width="15" height="11" stroke="#666" /></Ico></Btn>
      <Btn label="Oval"><Ico smooth><ellipse cx="8" cy="8" rx="7" ry="5.500" stroke="#555" /></Ico></Btn>
      <Btn label="Text box"><TextBoxI /></Btn>
      <Btn label="Vertical text box"><TextBoxI vertical /></Btn>
      <Btn label="WordArt"><WordArtI /></Btn>
      <Btn label="Diagram"><DiagramI /></Btn>
      <Btn label="Clip art"><ClipI /></Btn>
      <Btn label="Picture"><PictureI /></Btn>
      <Sep />
      <Btn label="Fill color"><FillI /></Btn>
      <Drop label="Fill color list" />
      <Btn label="Line color"><LineColorI /></Btn>
      <Drop label="Line color list" />
      <Btn label="Text color"><FontColorI /></Btn>
      <Drop label="Text color list" />
      <Btn label="Line style"><Ico><path d="M0 3h15v1H0zM0 6h15v2H0zM0 10h15v3H0z" fill="#555" /></Ico></Btn>
      <Btn label="Dash style">
        <Ico><path d="M0 3.500h15" stroke="#777" strokeDasharray="1 1" /><path d="M0 6.500h15M0 9.500h15" stroke="#777" strokeDasharray="2 1" /><path d="M0 12.500h15" stroke="#777" strokeDasharray="4 1" /></Ico>
      </Btn>
      <Btn label="Arrow style">
        <Ico><path d="M1 3.500h13M1 8.500h13M1 13.500h13M11 1l3 2.500-3 2.500M4 6L1 8.500 4 11M11 11l3 2.500-3 2M4 11l-3 2.500 3 2" stroke="#444" /></Ico>
      </Btn>
      <Btn label="Shadow"><Ico><rect x="4" y="4" width="10" height="10" rx="1" fill="#555" /><rect x="1.500" y="1.500" width="10" height="10" fill="#3f9c91" stroke="#44706a" /></Ico></Btn>
      <Btn label="3-D"><Ico smooth><path d="M.5 5.500h10v10H.5z" fill="#3f9c91" stroke="#555" /><path d="M.5 5.500l4-4h11l-5 4z" fill="#e9f3f1" stroke="#666" /><path d="M10.500 5.500l5-4v9l-5 5z" fill="#a9cfc9" stroke="#666" /></Ico></Btn>
      <Tail label="Drawing options" />
    </div>
  );
}

function StatusBar() {
  return (
    <footer className="flex h-[22px] shrink-0 items-center border-t border-[#808080] pl-[10px] whitespace-pre shadow-[inset_0_1px_0_#ffffff]">
      <span className="w-[68px]">Page  2</span>
      <span className="w-[75px]">Sec  1</span>
      <span className="w-[48px]">2/2</span>
      <span className="w-[63px]">At  5.3"</span>
      <span className="w-[43px]">Ln  18</span>
      <span className="w-[61px]">Col  6</span>
      <span className="w-[30px] text-[#9a9790]">REC</span>
      <span className="w-[30px] text-[#9a9790]">TRK</span>
      <span className="w-[29px] text-[#9a9790]">EXT</span>
      <span className="w-[32px]">OVR</span>
      <span className="w-[79px]">English (U.S</span>
      <Ico w={17} h={13}>
        <path d="M.5 2.500h3v-2h4l1 1 1-1h4v2h2v9h-6l-1 1-1-1h-7z" fill="#fff" stroke="#000" />
        <path d="M3.500 2v8h4l1 1 1-1h4V2M8.500 2v9" stroke="#000" />
        <path d="M10 9l3-5" stroke="#000" strokeWidth="1.500" shapeRendering="auto" />
      </Ico>
    </footer>
  );
}

function Task({ icon, text, active }: { icon: React.ReactNode; text: string; active?: boolean }) {
  return (
    <button
      className={
        'flex h-[23px] min-w-0 max-w-[160px] flex-1 items-center gap-[2px] pl-[3px] text-left ' +
        (active
          ? `border border-t-[#404040] border-l-[#404040] border-r-white border-b-white font-bold ${dither}`
          : raised)
      }
    >
      {icon}
      <span className="whitespace-pre">{text}</span>
    </button>
  );
}

function TaskBar() {
  return (
    <div className="flex h-[29px] shrink-0 items-center border-t border-white pr-[3px] pb-[3px] pl-[2px]">
      <button className={`flex h-[23px] w-[52px] shrink-0 items-center pl-px font-bold ${raised}`}>
        <WinI />
        Start
      </button>
      <div className="ml-[5px] flex min-w-0 flex-1 gap-[3px]">
        <Task icon={<WordIcon />} text="MY SUPER COOL PAPER ..." />
        <Task icon={<WordIcon />} text="49  reasons why reta..." active />
        <Task icon={<FolderI />} text="My Documents" />
        <Task icon={<MypalI />} text="CollabNet SearXNG - Mypal" />
      </div>
      <Ico w={16} h={14}>
        <path d="M2.500 5.500h11l2 3v5H.5v-5z" fill="#fff" stroke="#000" />
        <path d="M3 8.500h11M3 10.500h11" stroke="#000" strokeDasharray="1 1" />
        <path d="M4 12h8" stroke="#000" />
        <path d="M4 1.500l3 1 3-1 2 3" stroke="#000" shapeRendering="auto" />
      </Ico>
      <span className="mx-[4px] h-[24px] w-px bg-[#808080]" />
      <div className="flex h-[24px] w-[77px] items-center justify-between border border-t-[#808080] border-l-[#808080] border-r-white border-b-white pr-[7px] pl-[4px]">
        <button aria-label="Show hidden icons" className="text-[13px] font-bold">«</button>
        <time>11:11 AM</time>
      </div>
    </div>
  );
}

export default function App() {
  return (
    <div className="flex h-screen min-h-[400px] flex-col overflow-hidden bg-[#d4d0c8] font-['DejaVu_Sans_Condensed','DejaVu_Sans',sans-serif] text-[11px] leading-[14px] text-black">
      <TitleBar />
      <MenuBar />
      <StandardBar />
      <FormatBar />
      <HRuler />
      <div className="flex min-h-0 flex-1">
        <VRuler />
        <Page />
        <VScroll />
      </div>
      <HScroll />
      <DrawBar />
      <StatusBar />
      <TaskBar />
    </div>
  );
}
